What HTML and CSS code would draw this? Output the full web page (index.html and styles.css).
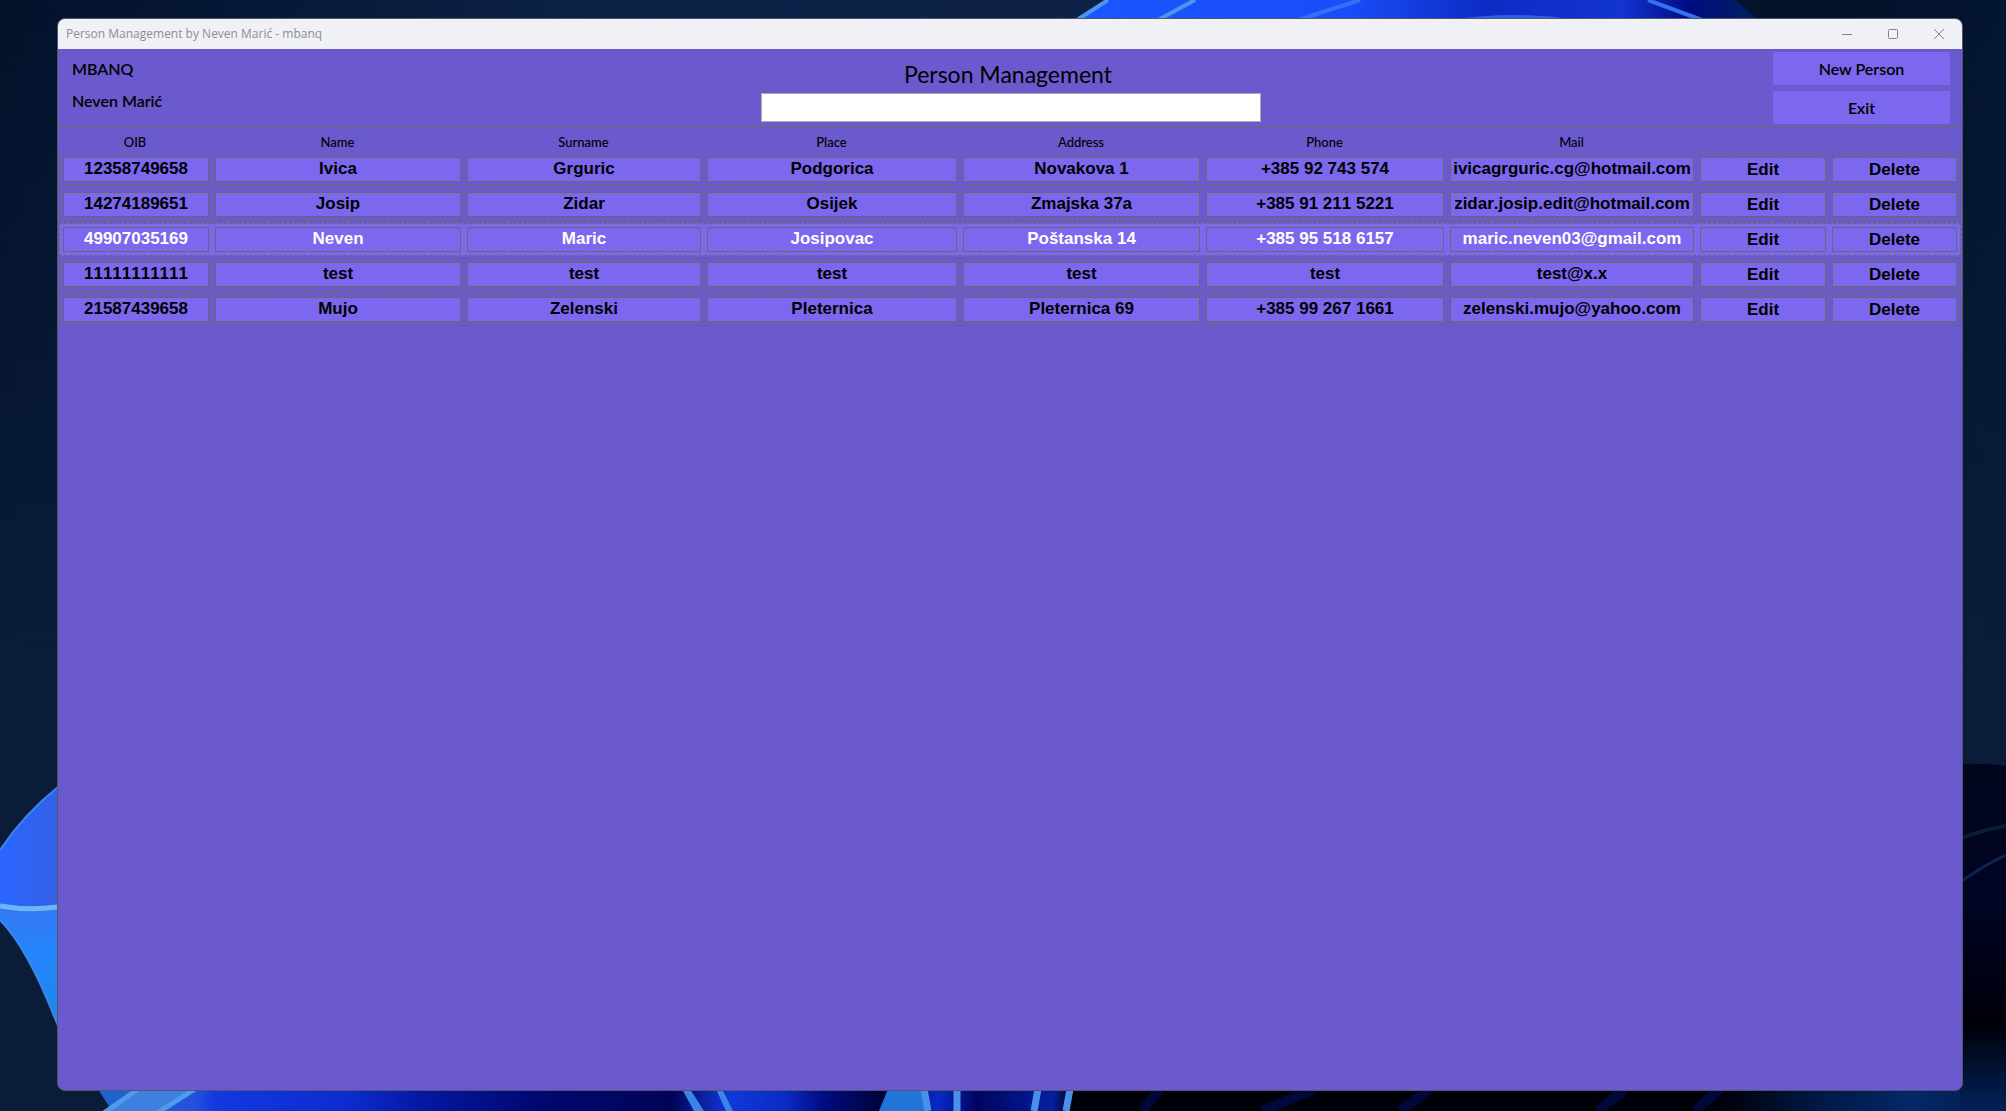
FILE: index.html
```html
<!DOCTYPE html>
<html lang="en">
<head>
<meta charset="utf-8">
<title>Person Management by Neven Marić - mbanq</title>
<link rel="stylesheet" href="styles.css">
</head>
<body>
<svg class="wallpaper" viewBox="0 0 2006 1111" preserveAspectRatio="none" aria-hidden="true">
  <defs>
    <linearGradient id="night"><stop offset="0" stop-color="#03112a"/><stop offset=".28" stop-color="#0b2146"/><stop offset=".52" stop-color="#0e2248"/><stop offset=".9" stop-color="#03112a"/><stop offset="1" stop-color="#04152f"/></linearGradient>
    <linearGradient id="side" x2="0" y2="1"><stop offset="0" stop-color="#0a1c38" stop-opacity="0"/><stop offset=".6" stop-color="#0a1c38"/></linearGradient>
    <linearGradient id="bloom"><stop offset="0" stop-color="#1a56ff"/><stop offset=".4" stop-color="#1a4cf8"/><stop offset=".6" stop-color="#0c2cc4"/><stop offset=".8" stop-color="#1234d0"/><stop offset=".9" stop-color="#000c80"/><stop offset="1" stop-color="#00205c"/></linearGradient>
    <linearGradient id="upper"><stop offset="0" stop-color="#2a66ff"/><stop offset="1" stop-color="#3460e4"/></linearGradient>
    <linearGradient id="lower" x2="0" y2="1"><stop offset="0" stop-color="#3478f4"/><stop offset=".4" stop-color="#2484fa"/><stop offset="1" stop-color="#1c88e4"/></linearGradient>
    <linearGradient id="floor" gradientUnits="userSpaceOnUse" x1="100" x2="2006" y1="0" y2="0">
      <stop offset="0" stop-color="#2064cc"/><stop offset=".05" stop-color="#2450dc"/><stop offset=".06" stop-color="#1238e0"/><stop offset=".13" stop-color="#0c2cd0"/><stop offset=".17" stop-color="#0418a0"/><stop offset=".23" stop-color="#000870"/><stop offset=".3" stop-color="#000458"/><stop offset=".33" stop-color="#1038dc"/><stop offset=".36" stop-color="#0a2ac4"/><stop offset=".38" stop-color="#000c80"/><stop offset=".41" stop-color="#00023c"/><stop offset=".44" stop-color="#0828c8"/><stop offset=".46" stop-color="#000460"/><stop offset=".5" stop-color="#0420a0"/><stop offset=".51" stop-color="#000008"/><stop offset=".85" stop-color="#000008"/><stop offset=".9" stop-color="#001844"/><stop offset=".95" stop-color="#042868"/><stop offset="1" stop-color="#001c4c"/>
    </linearGradient>
    <linearGradient id="shade" x2="0" y2="1"><stop offset="0" stop-color="#00041c"/><stop offset=".4" stop-color="#000424"/><stop offset=".75" stop-color="#000008"/><stop offset="1" stop-color="#002258"/></linearGradient>
  </defs>
  <rect width="2006" height="1111" fill="url(#night)"/>
  <rect width="2006" height="1111" fill="url(#side)"/>
  <path d="M1076 20L1107 0H1735L1758 20Z" fill="url(#bloom)"/>
  <path d="M1077 20L1108 0M1158 20L1195 0" stroke="#4a98ee" stroke-width="4"/>
  <path d="M1298 20L1360 0M1648 0L1702 20" stroke="#3470f4" stroke-width="4"/>
  <path d="M1450 20Q1514 10 1578 20" fill="#2c60ec"/>
  <path d="M58 787Q24 814 0 850V920Q28 948 58 1026Z" fill="url(#upper)"/>
  <path d="M0 908Q28 912 58 908V1026Q28 948 0 920Z" fill="url(#lower)"/>
  <path d="M0 906Q28 911 58 907" fill="none" stroke="#6cb8f6" stroke-width="5"/>
  <path d="M58 787Q24 814 0 850M0 920Q28 948 58 1026" fill="none" stroke="#3b86ee" stroke-width="2"/>
  <path d="M98 1089H1963V1111H112Z" fill="url(#floor)"/>
  <path d="M138 1089L104 1113H157L195 1089Z" fill="#3f7fe0"/>
  <path d="M138 1089L104 1113M195 1089L157 1113" stroke="#4c9cec" stroke-width="5"/>
  <path d="M682 1089H690L704 1111H694Z M716 1089H722L733 1111H726Z" fill="#3c84e6"/>
  <path d="M888 1089H926V1111H879Z" fill="#2274d8"/>
  <path d="M924 1089L928 1111M957 1089V1111M1038 1089L1034 1111M1070 1089L1066 1111" stroke="#4890ea" stroke-width="7"/>
  <path d="M1160 1089L1142 1111M1315 1089L1262 1111M1430 1089L1400 1111M1625 1089L1598 1111M1720 1089L1695 1111" stroke="#00107a" stroke-width="10" opacity=".45"/>
  <path d="M1960 764Q1986 763 2006 766V1111H1960Z" fill="url(#shade)"/>
  <path d="M1962 838Q1986 829 2006 826" fill="none" stroke="#081c34" stroke-width="4"/>
  <path d="M1962 881Q1984 865 2006 855" fill="none" stroke="#0a2450" stroke-width="3"/>
</svg>

<main class="window">
  <header class="titlebar">
    <span class="caption">Person Management by Neven Marić - mbanq</span>
    <div class="controls">
      <button type="button" aria-label="Minimize"><svg width="12" height="12" viewBox="0 0 12 12"><path d="M1 6.500H11"/></svg></button>
      <button type="button" aria-label="Maximize"><svg width="12" height="12" viewBox="0 0 12 12"><rect x="1.500" y="1.500" width="9" height="9" rx="1"/></svg></button>
      <button type="button" aria-label="Close"><svg width="12" height="12" viewBox="0 0 12 12"><path d="M1 1L11 11M11 1L1 11"/></svg></button>
    </div>
  </header>

  <section class="toolbar">
    <div class="owner"><span>MBANQ</span><span>Neven Marić</span></div>
    <div class="search">
      <h1><label for="search">Person Management</label></h1>
      <input id="search" type="text">
    </div>
    <div class="actions">
      <button type="button">New Person</button>
      <button type="button">Exit</button>
    </div>
  </section>

  <table class="people">
    <thead>
      <tr><th>OIB</th><th>Name</th><th>Surname</th><th>Place</th><th>Address</th><th>Phone</th><th>Mail</th><td></td></tr>
    </thead>
    <tbody>
      <tr><td>12358749658</td><td>Ivica</td><td>Grguric</td><td>Podgorica</td><td>Novakova 1</td><td>+385 92 743 574</td><td>ivicagrguric.cg@hotmail.com</td><td><button type="button">Edit</button></td><td><button type="button">Delete</button></td></tr>
      <tr><td>14274189651</td><td>Josip</td><td>Zidar</td><td>Osijek</td><td>Zmajska 37a</td><td>+385 91 211 5221</td><td>zidar.josip.edit@hotmail.com</td><td><button type="button">Edit</button></td><td><button type="button">Delete</button></td></tr>
      <tr class="selected"><td>49907035169</td><td>Neven</td><td>Maric</td><td>Josipovac</td><td>Poštanska 14</td><td>+385 95 518 6157</td><td>maric.neven03@gmail.com</td><td><button type="button">Edit</button></td><td><button type="button">Delete</button></td></tr>
      <tr><td>11111111111</td><td>test</td><td>test</td><td>test</td><td>test</td><td>test</td><td>test@x.x</td><td><button type="button">Edit</button></td><td><button type="button">Delete</button></td></tr>
      <tr><td>21587439658</td><td>Mujo</td><td>Zelenski</td><td>Pleternica</td><td>Pleternica 69</td><td>+385 99 267 1661</td><td>zelenski.mujo@yahoo.com</td><td><button type="button">Edit</button></td><td><button type="button">Delete</button></td></tr>
    </tbody>
  </table>
</main>
</body>
</html>
```
FILE: styles.css
```css
* {
  box-sizing: border-box;
}

:root {
  --slate: #6a5acd;
  --slate-light: #7b68ee;
  --line: #696969;
  --line-faint: #6c5ebc;
}

body {
  margin: 0;
  min-height: 100vh;
  display: flex;
  padding: 18px 43px 20px 57px;
  background: #03112a;
  color: #000;
  font-family: Lato, "Noto Sans", sans-serif;
}

button {
  border: 0;
  padding: 0;
  font: inherit;
  color: inherit;
}

.wallpaper {
  position: absolute;
  inset: 0;
  width: 100%;
  height: 100%;
}

.window {
  position: relative;
  flex: 1;
  min-width: 0;
  border: 1px solid #55556a;
  border-radius: 8px;
  overflow: hidden;
  background: var(--slate);
}

.titlebar {
  display: flex;
  justify-content: space-between;
  height: 30px;
  padding-left: 8px;
  background: #f0f1f6;
  color: #8e8e92;
}

.caption {
  font: 12px/30px "Open Sans", "Noto Sans", sans-serif;
}

.controls {
  display: flex;
}

.controls button {
  display: grid;
  place-items: center;
  width: 46px;
  background: none;
}

.controls svg {
  fill: none;
  stroke: #858589;
}

.toolbar {
  display: grid;
  grid-template-columns: 1fr 500px 1fr;
  height: 78px;
  padding: 3px 12px 2px 14px;
  font-size: 16px;
  font-weight: 600;
}

.owner {
  display: flex;
  flex-direction: column;
  gap: 12px;
  padding-top: 7px;
  line-height: 20px;
}

.search {
  display: flex;
  flex-direction: column;
  align-items: center;
}

.search h1 {
  margin: 0;
  padding: 6px 6px 3px 0;
  font-size: 23px;
  font-weight: 400;
  line-height: 32px;
}

.search input {
  width: 100%;
  height: 29px;
  border: 1px solid #abadb3;
  background: #fff;
}

.actions {
  display: flex;
  flex-direction: column;
  gap: 6px;
  justify-self: end;
  width: 177px;
}

.actions button {
  height: 33px;
  background: var(--slate-light);
}

.people {
  display: block;
  padding: 0 1px;
  border-top: 1px solid var(--line);
  font: bold 17px/22px "Liberation Sans", Arial, sans-serif;
  font-kerning: none;
  text-align: center;
  white-space: nowrap;
}

.people thead,
.people tbody {
  display: block;
}

.people tr {
  display: grid;
}

.people th,
.people td {
  min-width: 0;
  padding: 0;
}

.people thead tr {
  grid-template-columns: 153fr 252fr 240fr 256fr 243fr 244fr 250fr 264fr;
  height: 26px;
}

.people th {
  border-right: 1px solid var(--line-faint);
  border-bottom: 1px solid var(--line-faint);
  font: 500 13px/28px Lato, "Noto Sans", sans-serif;
  height: 26px;
}

.people thead td {
  border-bottom: 1px dashed var(--line);
}

.people tbody tr {
  grid-template-columns: 146fr 246fr 234fr 250fr 237fr 238fr 244fr 126fr 125fr;
  gap: 6px;
  padding: 3px;
  border: 1px dashed var(--line);
  margin-bottom: 2px;
}

.people tbody tr:first-child {
  border-top: 0;
}

.people tbody td {
  height: 25px;
  border: 1px solid var(--line);
  background: var(--slate-light);
}

.people td button {
  display: block;
  width: 100%;
  height: 100%;
  background: none;
  color: #000;
}

.people .selected {
  background: var(--slate-light);
  color: #fff;
}
```
